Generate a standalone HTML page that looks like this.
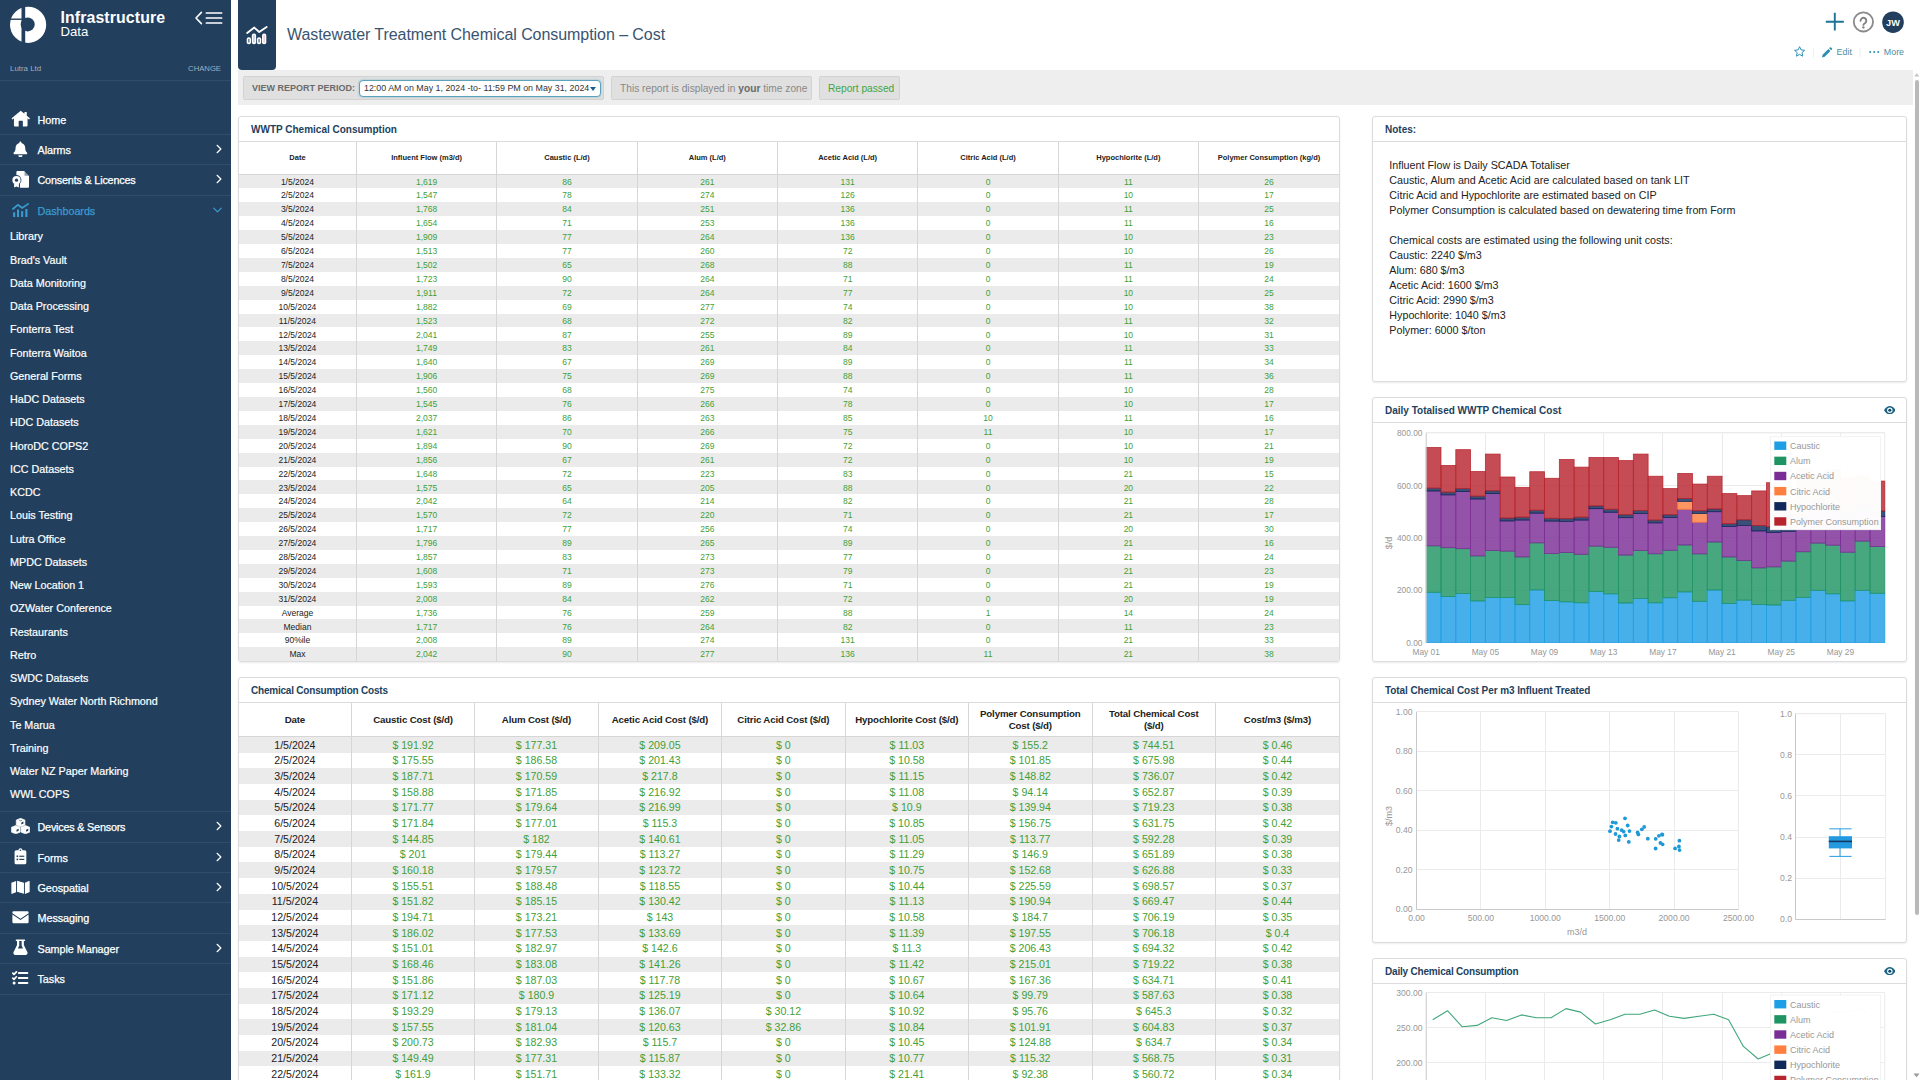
<!DOCTYPE html>
<html><head><meta charset="utf-8"><title>Wastewater Treatment Chemical Consumption - Cost</title>
<style>
*{box-sizing:border-box;margin:0;padding:0}
html,body{width:1920px;height:1080px;overflow:hidden;background:#fff;font-family:"Liberation Sans",sans-serif;color:#222}
.abs{position:absolute}
#side{position:absolute;left:0;top:0;width:231px;height:1080px;background:#223f5d;color:#fff;overflow:hidden}
#side .brand1{position:absolute;left:60.5px;top:9.2px;font-size:15.9px;font-weight:bold;letter-spacing:0.1px;line-height:18px;white-space:nowrap}
#side .brand2{position:absolute;left:60.5px;top:24.2px;font-size:13.2px;line-height:16px;white-space:nowrap}
#side .org{position:absolute;left:10px;top:62.5px;font-size:7.9px;line-height:12px;color:#9fb0c3}
#side .chg{position:absolute;right:10px;top:62.5px;font-size:7.7px;line-height:12px;color:#9fb0c3}
.hr{position:absolute;left:0;width:231px;height:1px;background:#2f4d6d}
.nav{position:absolute;left:0;width:231px;height:30px;font-size:10.8px;letter-spacing:-0.05px;line-height:30px;white-space:nowrap}
.nav .ic{position:absolute;left:10px;top:-1px;width:21px;height:30px;display:flex;align-items:center;justify-content:center}
.nav .tx{position:absolute;left:37.5px;top:0;-webkit-text-stroke:0.25px #fff}
.nav.act .tx{-webkit-text-stroke:0.25px #3a9bd0}
.nav .chev{position:absolute;right:9px;top:50%;transform:translateY(-50%);margin-top:-1px}
.nav.act .tx{color:#3a9bd0}
.sub{position:absolute;left:10px;font-size:10.75px;line-height:14px;white-space:nowrap;color:#fff;-webkit-text-stroke:0.2px #fff}
#hdr{position:absolute;left:231px;top:0;width:1689px;height:70px;background:#fff}
#hicon{position:absolute;left:238px;top:0;width:38px;height:70px;background:#223f5d;border-radius:0 0 4px 4px}
#title{position:absolute;left:287px;top:24px;font-size:16px;letter-spacing:-0.06px;line-height:22px;color:#3a546f;white-space:nowrap}
#tool{position:absolute;left:238px;top:70px;width:1675px;height:34.5px;background:#eee}
.tb{position:absolute;top:75.5px;height:24.5px;background:#e0e0e0;border:1px solid #d2d2d2;border-radius:2px;font-size:10.2px;line-height:23.5px;color:#777;white-space:nowrap}
.card{position:absolute;background:#fff;border:1px solid #dcdcdc;border-radius:3px;box-shadow:0 1px 2px rgba(0,0,0,.08)}
.card .ct{position:absolute;left:0;top:0;right:0;height:25px;border-bottom:1px solid #dcdcdc;font-size:10px;font-weight:bold;color:#223f5d;line-height:24px;padding:1px 0 0 12px;white-space:nowrap}
table{border-collapse:collapse;table-layout:fixed;position:absolute;left:0}
td,th{text-align:center;white-space:nowrap;overflow:hidden;padding:0;border-left:1px solid #d6d6d6}
td:first-child,th:first-child{border-left:none}
#t1{top:25px;width:1100px;font-size:8.5px}
#t1 th{height:32px;font-size:7.5px;font-weight:bold;color:#222;border-bottom:1px solid #d6d6d6}
#t1 td{height:13.914px;line-height:12.8px;padding-top:1.1px;color:#3f9f38}
#t1 td:first-child{color:#222}
#t2{top:25px;width:1100px;font-size:10.6px}
#t2 th{height:33.7px;font-size:9.7px;letter-spacing:-0.15px;line-height:11.4px;font-weight:bold;color:#222;border-bottom:1px solid #d6d6d6;white-space:normal}
#t2 td{height:15.68px;line-height:15.2px;padding-top:0.4px;color:#3f9f38}
#t2 td:first-child{color:#222}
tr.a td{background:#ebebeb}
.notes{position:absolute;left:16.3px;top:41px;font-size:10.74px;line-height:15px;color:#222;white-space:nowrap}
svg text{font-family:"Liberation Sans",sans-serif}
</style></head><body>

<div id="side">
<svg class="abs" style="left:9px;top:6px" width="38" height="38" viewBox="0 0 38 38"><circle cx="19.1" cy="18.8" r="18.1" fill="#fff"/><rect x="12.5" y="0" width="3.7" height="38" fill="#223f5d"/><rect x="0" y="12.5" width="13" height="1.4" fill="#223f5d"/><circle cx="18.7" cy="18.4" r="7" fill="#223f5d"/></svg>
<div class="brand1">Infrastructure</div><div class="brand2">Data</div>
<svg class="abs" style="left:194px;top:11px" width="30" height="14" viewBox="0 0 30 14"><path d="M7.4 1.4 L2 7 L7.4 12.6" fill="none" stroke="#fff" stroke-width="1.6" stroke-linecap="round" stroke-linejoin="round"/><path d="M12.4 2 H27.6 M12.4 7 H27.6 M12.4 12 H27.6" stroke="#fff" stroke-width="1.7" stroke-linecap="round"/></svg>
<div class="org">Lutra Ltd</div><div class="chg">CHANGE</div>
<div class="hr" style="top:80px"></div>
<div class="nav" style="top:104.85px"><span class="ic"><svg viewBox="0 0 24 22" width="19.5" height="17.2"><path d="M12 0.8 L0.7 10.3 a1 1 0 0 0 1.3 1.5 L3.3 10.7 V19.8 a1.2 1.2 0 0 0 1.2 1.2 H9.3 V14.6 a0.8 0.8 0 0 1 0.8 -0.8 H13.9 a0.8 0.8 0 0 1 0.8 0.8 V21 H19.5 a1.2 1.2 0 0 0 1.2 -1.2 V10.7 L22 11.8 a1 1 0 0 0 1.3 -1.5 L19.7 7.3 V3 a0.6 0.6 0 0 0 -0.6 -0.6 H17.3 a0.6 0.6 0 0 0 -0.6 0.6 V4.8 Z" fill="#fff"/></svg></span><span class="tx">Home</span></div>
<div class="hr" style="top:134px"></div>
<div class="nav" style="top:135px"><span class="ic"><svg viewBox="0 0 20 22" width="14.8" height="16.6"><path d="M10 0.4 a1.4 1.4 0 0 1 1.4 1.4 v0.6 c3.2 0.7 5.1 3.3 5.1 6.5 c0 3.6 1 5 2.4 6.4 c0.8 0.9 0.2 2.3 -0.9 2.3 H2 c-1.1 0 -1.7 -1.4 -0.9 -2.3 C2.5 13.9 3.5 12.5 3.5 8.9 c0 -3.2 1.9 -5.8 5.1 -6.5 V1.8 A1.4 1.4 0 0 1 10 0.4 Z M7.2 18.9 h5.6 a2.8 2.8 0 0 1 -5.6 0 Z" fill="#fff"/></svg></span><span class="tx">Alarms</span><svg class="chev" viewBox="0 0 8 12" width="6" height="9"><path d="M1.5 1 L6.5 6 L1.5 11" fill="none" stroke="#fff" stroke-width="1.6" stroke-linecap="round" stroke-linejoin="round"/></svg></div>
<div class="hr" style="top:163.7px"></div>
<div class="nav" style="top:165.3px"><span class="ic"><svg viewBox="0 0 17.4 16.8" width="17.4" height="16.8"><path d="M5.2 0.1 H12.2 L17.3 5.2 V15.4 a1.3 1.3 0 0 1 -1.3 1.3 H8 V12.4 a5 5 0 0 0 -3.6 -8.4 V0.9 a0.8 0.8 0 0 1 0.8 -0.8 Z" fill="#fff"/><path d="M12.6 0.3 V4.8 H17.1 Z" fill="#223f5d" opacity=".5"/><circle cx="4.5" cy="9.2" r="4.1" fill="#fff"/><circle cx="4.5" cy="9.2" r="1.6" fill="#223f5d"/><path d="M2.1 12.4 V16.6 L4.5 15.4 L6.9 16.6 V12.4 Z" fill="#fff"/></svg></span><span class="tx"><span style="letter-spacing:-0.18px">Consents &amp; Licences</span></span><svg class="chev" viewBox="0 0 8 12" width="6" height="9"><path d="M1.5 1 L6.5 6 L1.5 11" fill="none" stroke="#fff" stroke-width="1.6" stroke-linecap="round" stroke-linejoin="round"/></svg></div>
<div class="hr" style="top:195px"></div>
<div class="nav act" style="top:196px"><span class="ic"><svg viewBox="0 0 17 14.4" width="17" height="14.4"><path d="M0.9 6 L5.8 1.8 L10.2 5 L16.2 0.9" fill="none" stroke="#3a9bd0" stroke-width="1.7" stroke-linecap="round" stroke-linejoin="round"/><rect x="1.1" y="9.2" width="2.1" height="4.9" rx=".4" fill="#3a9bd0"/><rect x="5" y="6.6" width="2.1" height="7.5" rx=".4" fill="#3a9bd0"/><rect x="9.1" y="8" width="2.1" height="6.1" rx=".4" fill="#3a9bd0"/><rect x="13.3" y="6" width="2.2" height="8.1" rx=".4" fill="#3a9bd0"/></svg></span><span class="tx">Dashboards</span><svg class="chev" viewBox="0 0 12 8" width="9" height="6"><path d="M1 1.5 L6 6.5 L11 1.5" fill="none" stroke="#3a9bd0" stroke-width="1.6" stroke-linecap="round" stroke-linejoin="round"/></svg></div>
<div class="sub" style="top:229.30px">Library</div>
<div class="sub" style="top:252.55px">Brad's Vault</div>
<div class="sub" style="top:275.80px">Data Monitoring</div>
<div class="sub" style="top:299.05px">Data Processing</div>
<div class="sub" style="top:322.30px">Fonterra Test</div>
<div class="sub" style="top:345.55px">Fonterra Waitoa</div>
<div class="sub" style="top:368.80px">General Forms</div>
<div class="sub" style="top:392.05px">HaDC Datasets</div>
<div class="sub" style="top:415.30px">HDC Datasets</div>
<div class="sub" style="top:438.55px">HoroDC COPS2</div>
<div class="sub" style="top:461.80px">ICC Datasets</div>
<div class="sub" style="top:485.05px">KCDC</div>
<div class="sub" style="top:508.30px">Louis Testing</div>
<div class="sub" style="top:531.55px">Lutra Office</div>
<div class="sub" style="top:554.80px">MPDC Datasets</div>
<div class="sub" style="top:578.05px">New Location 1</div>
<div class="sub" style="top:601.30px">OZWater Conference</div>
<div class="sub" style="top:624.55px">Restaurants</div>
<div class="sub" style="top:647.80px">Retro</div>
<div class="sub" style="top:671.05px">SWDC Datasets</div>
<div class="sub" style="top:694.30px">Sydney Water North Richmond</div>
<div class="sub" style="top:717.55px">Te Marua</div>
<div class="sub" style="top:740.80px">Training</div>
<div class="sub" style="top:764.05px">Water NZ Paper Marking</div>
<div class="sub" style="top:787.30px">WWL COPS</div>
<div class="hr" style="top:811.2px"></div>
<div class="nav" style="top:812.2px"><span class="ic"><svg viewBox="0 0 24 20" width="19.2" height="16.2"><path d="M12 0.3 L17.4 2.4 V8.6 L12 10.9 L6.6 8.6 V2.4 Z" fill="#fff" stroke="#fff" stroke-width=".8" stroke-linejoin="round"/><path d="M6 9.3 L11.4 11.4 V17.6 L6 19.7 L0.6 17.6 V11.4 Z" fill="#fff" stroke="#fff" stroke-width=".8" stroke-linejoin="round"/><path d="M18 9.3 L23.4 11.4 V17.6 L18 19.7 L12.6 17.6 V11.4 Z" fill="#fff" stroke="#fff" stroke-width=".8" stroke-linejoin="round"/><path d="M12.9 5.6 L15.6 4.4 V6.8 L12.9 8 Z M6.9 14.6 L9.6 13.4 V15.8 L6.9 17 Z M18.9 14.6 L21.6 13.4 V15.8 L18.9 17 Z" fill="#223f5d"/><path d="M10 2.6 L12 3.4 L14 2.6" stroke="#223f5d" stroke-width=".7" fill="none"/></svg></span><span class="tx"><span style="letter-spacing:-0.2px">Devices &amp; Sensors</span></span><svg class="chev" viewBox="0 0 8 12" width="6" height="9"><path d="M1.5 1 L6.5 6 L1.5 11" fill="none" stroke="#fff" stroke-width="1.6" stroke-linecap="round" stroke-linejoin="round"/></svg></div>
<div class="hr" style="top:841.6px"></div>
<div class="nav" style="top:842.58px"><span class="ic"><svg viewBox="0 0 18 23" width="12.9" height="16.8"><path d="M6.2 2.8 a2.8 2.8 0 0 1 5.6 0 H15 a2.2 2.2 0 0 1 2.2 2.2 V20.4 a2.2 2.2 0 0 1 -2.2 2.2 H3 a2.2 2.2 0 0 1 -2.2 -2.2 V5 A2.2 2.2 0 0 1 3 2.8 Z" fill="#fff"/><circle cx="9" cy="3" r="1.1" fill="#223f5d"/><g fill="#223f5d"><rect x="3.6" y="10.2" width="2.2" height="2.2"/><rect x="7.4" y="10.5" width="7" height="1.6"/><rect x="3.6" y="14.6" width="2.2" height="2.2"/><rect x="7.4" y="14.9" width="7" height="1.6"/></g></svg></span><span class="tx">Forms</span><svg class="chev" viewBox="0 0 8 12" width="6" height="9"><path d="M1.5 1 L6.5 6 L1.5 11" fill="none" stroke="#fff" stroke-width="1.6" stroke-linecap="round" stroke-linejoin="round"/></svg></div>
<div class="hr" style="top:872.0px"></div>
<div class="nav" style="top:872.96px"><span class="ic"><svg viewBox="0 0 24 18" width="19" height="14.2"><path d="M0.4 3.6 L6.4 1.2 V15.6 L1.4 17.6 a0.7 0.7 0 0 1 -1 -0.7 Z M7.6 1 L16.4 3.6 V17.6 L7.6 15 Z M17.6 3.4 L22.6 1.2 a0.7 0.7 0 0 1 1 0.7 V15.2 L17.6 17.8 Z" fill="#fff"/></svg></span><span class="tx">Geospatial</span><svg class="chev" viewBox="0 0 8 12" width="6" height="9"><path d="M1.5 1 L6.5 6 L1.5 11" fill="none" stroke="#fff" stroke-width="1.6" stroke-linecap="round" stroke-linejoin="round"/></svg></div>
<div class="hr" style="top:902.3px"></div>
<div class="nav" style="top:903.34px"><span class="ic"><svg viewBox="0 0 24 18" width="17" height="12.6"><path d="M2.2 0.4 H21.8 a1.8 1.8 0 0 1 1.8 1.8 v0.9 L12 11 L0.4 3.1 V2.2 A1.8 1.8 0 0 1 2.2 0.4 Z M0.4 5 L12 12.8 L23.6 5 V15.8 a1.8 1.8 0 0 1 -1.8 1.8 H2.2 A1.8 1.8 0 0 1 0.4 15.8 Z" fill="#fff"/></svg></span><span class="tx">Messaging</span></div>
<div class="hr" style="top:932.7px"></div>
<div class="nav" style="top:933.72px"><span class="ic"><svg viewBox="0 0 20 22" width="14.9" height="16.7"><path d="M4.6 0.6 H15.4 a1 1 0 0 1 0 2 H14.6 V8 L19.2 17.4 a2.6 2.6 0 0 1 -2.3 3.8 H3.1 A2.6 2.6 0 0 1 0.8 17.4 L5.4 8 V2.6 H4.6 a1 1 0 0 1 0 -2 Z" fill="#fff"/><path d="M8.4 2.6 H11.6 V8.6 L13.4 12.4 H6.6 L8.4 8.6 Z" fill="#223f5d"/></svg></span><span class="tx">Sample Manager</span><svg class="chev" viewBox="0 0 8 12" width="6" height="9"><path d="M1.5 1 L6.5 6 L1.5 11" fill="none" stroke="#fff" stroke-width="1.6" stroke-linecap="round" stroke-linejoin="round"/></svg></div>
<div class="hr" style="top:963.1px"></div>
<div class="nav" style="top:964.1px"><span class="ic"><svg viewBox="0 0 16.6 13.6" width="16.6" height="13.6"><path d="M0.8 2.2 L2 3.4 L4.4 0.8 M0.8 7.2 L2 8.4 L4.4 5.8" stroke="#fff" stroke-width="1.7" fill="none" stroke-linecap="round" stroke-linejoin="round"/><circle cx="2.1" cy="12" r="1.5" fill="#fff"/><rect x="5.8" y="1.1" width="10.6" height="2" rx="1" fill="#fff"/><rect x="5.8" y="6" width="10.6" height="2" rx="1" fill="#fff"/><rect x="5.8" y="11" width="10.6" height="2" rx="1" fill="#fff"/></svg></span><span class="tx">Tasks</span></div>
<div class="hr" style="top:993.5px"></div>
</div>
<div id="hdr"></div><div id="hicon"><svg class="abs" style="left:8.2px;top:25.6px" width="22" height="19" viewBox="0 0 22 19"><path d="M1.2 7 L8.3 1.6 L13.2 6 L20.6 1" fill="none" stroke="#fff" stroke-width="1.9" stroke-linecap="round" stroke-linejoin="round"/><rect x="0.7" y="11.2" width="4.3" height="7" rx="2" fill="#fff"/><rect x="5.8" y="7.4" width="4.3" height="10.8" rx="2" fill="#fff"/><rect x="10.9" y="11.2" width="4.3" height="7" rx="2" fill="#fff"/><rect x="16" y="7.4" width="4.3" height="10.8" rx="2" fill="#fff"/><rect x="2.2" y="12.8" width="1.3" height="3.8" rx=".6" fill="#5a6f88"/><rect x="7.3" y="9" width="1.3" height="7.6" rx=".6" fill="#b5c4e6"/><rect x="12.4" y="12.8" width="1.3" height="3.8" rx=".6" fill="#5a6f88"/><rect x="17.5" y="9" width="1.3" height="7.6" rx=".6" fill="#ecc4cf"/></svg></div>
<div id="title">Wastewater Treatment Chemical Consumption &ndash; Cost</div>
<svg class="abs" style="left:1780px;top:0" width="140" height="70" viewBox="0 0 140 70"><path d="M45.8 21.7 H63.8 M54.8 12.8 V30.6" stroke="#1d7395" stroke-width="1.9" fill="none"/><circle cx="83.4" cy="21.9" r="9.6" fill="none" stroke="#8a8a8a" stroke-width="1.8"/><path d="M80.5 20.7 a2.9 2.9 0 1 1 4.4 2.5 c-1 0.6 -1.5 0.9 -1.5 1.7" fill="none" stroke="#808080" stroke-width="1.9" stroke-linecap="round"/><circle cx="83.4" cy="27.4" r="1.2" fill="#808080"/><circle cx="113" cy="22.2" r="10.8" fill="#223f5d"/><text x="113" y="25.5" font-size="9.2" font-weight="bold" fill="#fff" text-anchor="middle">JW</text><path d="M19.6 46.7 L21.1 49.9 L24.6 50.3 L22 52.7 L22.7 56.2 L19.6 54.4 L16.5 56.2 L17.2 52.7 L14.6 50.3 L18.1 49.9 Z" fill="none" stroke="#2a8fb2" stroke-width="1" stroke-linejoin="round"/><path d="M33.5 47.5 V57.5 M80 47.5 V57.5" stroke="#efefef" stroke-width="1"/><path d="M42 57.4 L42.6 54.7 L48.4 48.9 L50.5 51 L44.7 56.8 Z M49.1 48.2 L49.8 47.5 a0.9 0.9 0 0 1 1.3 0 L51.9 48.3 a0.9 0.9 0 0 1 0 1.3 L51.2 50.3 Z" fill="#2a8fb2"/><text x="56.6" y="55.2" font-size="8.9" fill="#4d8ca6">Edit</text><circle cx="90.2" cy="51.9" r="1" fill="#2a8fb2"/><circle cx="94.2" cy="51.9" r="1" fill="#2a8fb2"/><circle cx="98.2" cy="51.9" r="1" fill="#2a8fb2"/><text x="103.8" y="55.2" font-size="8.9" fill="#4d8ca6">More</text></svg>
<div id="tool"></div>
<div class="tb" style="left:243px;width:361px"><b style="position:absolute;left:8px;top:0;color:#6a6a6a;font-size:9px">VIEW REPORT PERIOD:</b><div style="position:absolute;left:115px;top:3.5px;width:242px;height:16.5px;background:#fff;border:1px solid #5aa3bb;border-radius:4px;box-shadow:0 0 2px rgba(60,150,180,.6);font-size:8.9px;line-height:15px;color:#333;padding-left:4px">12:00 AM on May 1, 2024 -to- 11:59 PM on May 31, 2024<svg class="abs" style="right:4px;top:5.5px" width="6" height="4" viewBox="0 0 6 4"><path d="M0 0 H6 L3 4 Z" fill="#1d5f8a"/></svg></div></div>
<div class="tb" style="left:611px;width:201px;padding-left:8px;color:#888">This report is displayed in <b style="color:#6a6a6a">your</b> time zone</div>
<div class="tb" style="left:819px;width:81px;padding-left:8px;color:#43a443">Report passed</div>
<div class="abs" style="left:1913px;top:70px;width:7px;height:1010px;background:#fff"></div>
<div class="abs" style="left:1914.7px;top:80px;width:4.2px;height:835px;background:#b9b9b9;border-radius:2px"></div>
<svg class="abs" style="left:1913px;top:72px" width="7" height="5"><path d="M1.2 4.5 L3.8 1.2 L6.4 4.5 Z" fill="#c4c4c4"/></svg>
<svg class="abs" style="left:1913px;top:1073px" width="7" height="5"><path d="M0.5 0.5 L3.5 4.2 L6.5 0.5 Z" fill="#9a9a9a"/></svg>
<div class="card" style="left:238px;top:116px;width:1102px;height:546px"><div class="ct">WWTP Chemical Consumption</div>
<table id="t1"><colgroup><col style="width:117.4px"><col style="width:140.37px"><col style="width:140.37px"><col style="width:140.37px"><col style="width:140.37px"><col style="width:140.37px"><col style="width:140.37px"><col style="width:140.37px"></colgroup>
<tr><th>Date</th><th>Influent Flow (m3/d)</th><th>Caustic (L/d)</th><th>Alum (L/d)</th><th>Acetic Acid (L/d)</th><th>Citric Acid (L/d)</th><th>Hypochlorite (L/d)</th><th>Polymer Consumption (kg/d)</th></tr>
<tr class="a"><td>1/5/2024</td><td>1,619</td><td>86</td><td>261</td><td>131</td><td>0</td><td>11</td><td>26</td></tr>
<tr><td>2/5/2024</td><td>1,547</td><td>78</td><td>274</td><td>126</td><td>0</td><td>10</td><td>17</td></tr>
<tr class="a"><td>3/5/2024</td><td>1,768</td><td>84</td><td>251</td><td>136</td><td>0</td><td>11</td><td>25</td></tr>
<tr><td>4/5/2024</td><td>1,654</td><td>71</td><td>253</td><td>136</td><td>0</td><td>11</td><td>16</td></tr>
<tr class="a"><td>5/5/2024</td><td>1,909</td><td>77</td><td>264</td><td>136</td><td>0</td><td>10</td><td>23</td></tr>
<tr><td>6/5/2024</td><td>1,513</td><td>77</td><td>260</td><td>72</td><td>0</td><td>10</td><td>26</td></tr>
<tr class="a"><td>7/5/2024</td><td>1,502</td><td>65</td><td>268</td><td>88</td><td>0</td><td>11</td><td>19</td></tr>
<tr><td>8/5/2024</td><td>1,723</td><td>90</td><td>264</td><td>71</td><td>0</td><td>11</td><td>24</td></tr>
<tr class="a"><td>9/5/2024</td><td>1,911</td><td>72</td><td>264</td><td>77</td><td>0</td><td>10</td><td>25</td></tr>
<tr><td>10/5/2024</td><td>1,882</td><td>69</td><td>277</td><td>74</td><td>0</td><td>10</td><td>38</td></tr>
<tr class="a"><td>11/5/2024</td><td>1,523</td><td>68</td><td>272</td><td>82</td><td>0</td><td>11</td><td>32</td></tr>
<tr><td>12/5/2024</td><td>2,041</td><td>87</td><td>255</td><td>89</td><td>0</td><td>10</td><td>31</td></tr>
<tr class="a"><td>13/5/2024</td><td>1,749</td><td>83</td><td>261</td><td>84</td><td>0</td><td>11</td><td>33</td></tr>
<tr><td>14/5/2024</td><td>1,640</td><td>67</td><td>269</td><td>89</td><td>0</td><td>11</td><td>34</td></tr>
<tr class="a"><td>15/5/2024</td><td>1,906</td><td>75</td><td>269</td><td>88</td><td>0</td><td>11</td><td>36</td></tr>
<tr><td>16/5/2024</td><td>1,560</td><td>68</td><td>275</td><td>74</td><td>0</td><td>10</td><td>28</td></tr>
<tr class="a"><td>17/5/2024</td><td>1,545</td><td>76</td><td>266</td><td>78</td><td>0</td><td>10</td><td>17</td></tr>
<tr><td>18/5/2024</td><td>2,037</td><td>86</td><td>263</td><td>85</td><td>10</td><td>11</td><td>16</td></tr>
<tr class="a"><td>19/5/2024</td><td>1,621</td><td>70</td><td>266</td><td>75</td><td>11</td><td>10</td><td>17</td></tr>
<tr><td>20/5/2024</td><td>1,894</td><td>90</td><td>269</td><td>72</td><td>0</td><td>10</td><td>21</td></tr>
<tr class="a"><td>21/5/2024</td><td>1,856</td><td>67</td><td>261</td><td>72</td><td>0</td><td>10</td><td>19</td></tr>
<tr><td>22/5/2024</td><td>1,648</td><td>72</td><td>223</td><td>83</td><td>0</td><td>21</td><td>15</td></tr>
<tr class="a"><td>23/5/2024</td><td>1,575</td><td>65</td><td>205</td><td>88</td><td>0</td><td>20</td><td>22</td></tr>
<tr><td>24/5/2024</td><td>2,042</td><td>64</td><td>214</td><td>82</td><td>0</td><td>21</td><td>28</td></tr>
<tr class="a"><td>25/5/2024</td><td>1,570</td><td>72</td><td>220</td><td>71</td><td>0</td><td>21</td><td>17</td></tr>
<tr><td>26/5/2024</td><td>1,717</td><td>77</td><td>256</td><td>74</td><td>0</td><td>20</td><td>30</td></tr>
<tr class="a"><td>27/5/2024</td><td>1,796</td><td>89</td><td>265</td><td>89</td><td>0</td><td>21</td><td>16</td></tr>
<tr><td>28/5/2024</td><td>1,857</td><td>83</td><td>273</td><td>77</td><td>0</td><td>21</td><td>24</td></tr>
<tr class="a"><td>29/5/2024</td><td>1,608</td><td>71</td><td>273</td><td>79</td><td>0</td><td>21</td><td>23</td></tr>
<tr><td>30/5/2024</td><td>1,593</td><td>89</td><td>276</td><td>71</td><td>0</td><td>21</td><td>19</td></tr>
<tr class="a"><td>31/5/2024</td><td>2,008</td><td>84</td><td>262</td><td>72</td><td>0</td><td>20</td><td>19</td></tr>
<tr><td>Average</td><td>1,736</td><td>76</td><td>259</td><td>88</td><td>1</td><td>14</td><td>24</td></tr>
<tr class="a"><td>Median</td><td>1,717</td><td>76</td><td>264</td><td>82</td><td>0</td><td>11</td><td>23</td></tr>
<tr><td>90%ile</td><td>2,008</td><td>89</td><td>274</td><td>131</td><td>0</td><td>21</td><td>33</td></tr>
<tr class="a"><td>Max</td><td>2,042</td><td>90</td><td>277</td><td>136</td><td>11</td><td>21</td><td>38</td></tr>
</table></div>
<div class="card" style="left:238px;top:677px;width:1102px;height:420px;border-radius:3px 3px 0 0"><div class="ct" style="letter-spacing:-0.21px">Chemical Consumption Costs</div>
<table id="t2"><colgroup><col style="width:112.3px"><col style="width:123.46px"><col style="width:123.46px"><col style="width:123.46px"><col style="width:123.46px"><col style="width:123.46px"><col style="width:123.46px"><col style="width:123.46px"><col style="width:123.46px"></colgroup>
<tr><th>Date</th><th>Caustic Cost ($/d)</th><th>Alum Cost ($/d)</th><th>Acetic Acid Cost ($/d)</th><th>Citric Acid Cost ($/d)</th><th>Hypochlorite Cost ($/d)</th><th>Polymer Consumption<br>Cost ($/d)</th><th>Total Chemical Cost<br>($/d)</th><th>Cost/m3 ($/m3)</th></tr>
<tr class="a"><td>1/5/2024</td><td>$ 191.92</td><td>$ 177.31</td><td>$ 209.05</td><td>$ 0</td><td>$ 11.03</td><td>$ 155.2</td><td>$ 744.51</td><td>$ 0.46</td></tr>
<tr><td>2/5/2024</td><td>$ 175.55</td><td>$ 186.58</td><td>$ 201.43</td><td>$ 0</td><td>$ 10.58</td><td>$ 101.85</td><td>$ 675.98</td><td>$ 0.44</td></tr>
<tr class="a"><td>3/5/2024</td><td>$ 187.71</td><td>$ 170.59</td><td>$ 217.8</td><td>$ 0</td><td>$ 11.15</td><td>$ 148.82</td><td>$ 736.07</td><td>$ 0.42</td></tr>
<tr><td>4/5/2024</td><td>$ 158.88</td><td>$ 171.85</td><td>$ 216.92</td><td>$ 0</td><td>$ 11.08</td><td>$ 94.14</td><td>$ 652.87</td><td>$ 0.39</td></tr>
<tr class="a"><td>5/5/2024</td><td>$ 171.77</td><td>$ 179.64</td><td>$ 216.99</td><td>$ 0</td><td>$ 10.9</td><td>$ 139.94</td><td>$ 719.23</td><td>$ 0.38</td></tr>
<tr><td>6/5/2024</td><td>$ 171.84</td><td>$ 177.01</td><td>$ 115.3</td><td>$ 0</td><td>$ 10.85</td><td>$ 156.75</td><td>$ 631.75</td><td>$ 0.42</td></tr>
<tr class="a"><td>7/5/2024</td><td>$ 144.85</td><td>$ 182</td><td>$ 140.61</td><td>$ 0</td><td>$ 11.05</td><td>$ 113.77</td><td>$ 592.28</td><td>$ 0.39</td></tr>
<tr><td>8/5/2024</td><td>$ 201</td><td>$ 179.44</td><td>$ 113.27</td><td>$ 0</td><td>$ 11.29</td><td>$ 146.9</td><td>$ 651.89</td><td>$ 0.38</td></tr>
<tr class="a"><td>9/5/2024</td><td>$ 160.18</td><td>$ 179.57</td><td>$ 123.72</td><td>$ 0</td><td>$ 10.75</td><td>$ 152.68</td><td>$ 626.88</td><td>$ 0.33</td></tr>
<tr><td>10/5/2024</td><td>$ 155.51</td><td>$ 188.48</td><td>$ 118.55</td><td>$ 0</td><td>$ 10.44</td><td>$ 225.59</td><td>$ 698.57</td><td>$ 0.37</td></tr>
<tr class="a"><td>11/5/2024</td><td>$ 151.82</td><td>$ 185.15</td><td>$ 130.42</td><td>$ 0</td><td>$ 11.13</td><td>$ 190.94</td><td>$ 669.47</td><td>$ 0.44</td></tr>
<tr><td>12/5/2024</td><td>$ 194.71</td><td>$ 173.21</td><td>$ 143</td><td>$ 0</td><td>$ 10.58</td><td>$ 184.7</td><td>$ 706.19</td><td>$ 0.35</td></tr>
<tr class="a"><td>13/5/2024</td><td>$ 186.02</td><td>$ 177.53</td><td>$ 133.69</td><td>$ 0</td><td>$ 11.39</td><td>$ 197.55</td><td>$ 706.18</td><td>$ 0.4</td></tr>
<tr><td>14/5/2024</td><td>$ 151.01</td><td>$ 182.97</td><td>$ 142.6</td><td>$ 0</td><td>$ 11.3</td><td>$ 206.43</td><td>$ 694.32</td><td>$ 0.42</td></tr>
<tr class="a"><td>15/5/2024</td><td>$ 168.46</td><td>$ 183.08</td><td>$ 141.26</td><td>$ 0</td><td>$ 11.42</td><td>$ 215.01</td><td>$ 719.22</td><td>$ 0.38</td></tr>
<tr><td>16/5/2024</td><td>$ 151.86</td><td>$ 187.03</td><td>$ 117.78</td><td>$ 0</td><td>$ 10.67</td><td>$ 167.36</td><td>$ 634.71</td><td>$ 0.41</td></tr>
<tr class="a"><td>17/5/2024</td><td>$ 171.12</td><td>$ 180.9</td><td>$ 125.19</td><td>$ 0</td><td>$ 10.64</td><td>$ 99.79</td><td>$ 587.63</td><td>$ 0.38</td></tr>
<tr><td>18/5/2024</td><td>$ 193.29</td><td>$ 179.13</td><td>$ 136.07</td><td>$ 30.12</td><td>$ 10.92</td><td>$ 95.76</td><td>$ 645.3</td><td>$ 0.32</td></tr>
<tr class="a"><td>19/5/2024</td><td>$ 157.55</td><td>$ 181.04</td><td>$ 120.63</td><td>$ 32.86</td><td>$ 10.84</td><td>$ 101.91</td><td>$ 604.83</td><td>$ 0.37</td></tr>
<tr><td>20/5/2024</td><td>$ 200.73</td><td>$ 182.93</td><td>$ 115.7</td><td>$ 0</td><td>$ 10.45</td><td>$ 124.88</td><td>$ 634.7</td><td>$ 0.34</td></tr>
<tr class="a"><td>21/5/2024</td><td>$ 149.49</td><td>$ 177.31</td><td>$ 115.87</td><td>$ 0</td><td>$ 10.77</td><td>$ 115.32</td><td>$ 568.75</td><td>$ 0.31</td></tr>
<tr><td>22/5/2024</td><td>$ 161.9</td><td>$ 151.71</td><td>$ 133.32</td><td>$ 0</td><td>$ 21.41</td><td>$ 92.38</td><td>$ 560.72</td><td>$ 0.34</td></tr>
<tr class="a"><td>23/5/2024</td><td>$ 145.6</td><td>$ 139.4</td><td>$ 140.8</td><td>$ 0</td><td>$ 20.8</td><td>$ 132</td><td>$ 578.6</td><td>$ 0.37</td></tr>
</table></div>
<div class="card" style="left:1372px;top:116px;width:535px;height:266px"><div class="ct">Notes:</div><div class="notes">Influent Flow is Daily SCADA Totaliser<br>Caustic, Alum and Acetic Acid are calculated based on tank LIT<br>Citric Acid and Hypochlorite are estimated based on CIP<br>Polymer Consumption is calculated based on dewatering time from Form<br><br>Chemical costs are estimated using the following unit costs:<br>Caustic: 2240 $/m3<br>Alum: 680 $/m3<br>Acetic Acid: 1600 $/m3<br>Citric Acid: 2990 $/m3<br>Hypochlorite: 1040 $/m3<br>Polymer: 6000 $/ton</div></div>
<div class="card" style="left:1372px;top:397px;width:535px;height:265px"><div class="ct">Daily Totalised WWTP Chemical Cost</div><svg class="abs" style="right:10.7px;top:7.7px" width="11.6" height="8.4" viewBox="0 0 11.6 8.4"><path d="M0 4.2 C1.8 1.2 3.8 0 5.8 0 S9.8 1.2 11.6 4.2 C9.8 7.2 7.8 8.4 5.8 8.4 S1.8 7.2 0 4.2 Z" fill="#1f6283"/><circle cx="5.8" cy="4.2" r="2.75" fill="#e4faff"/><circle cx="5.8" cy="4.2" r="1.5" fill="#17435c"/></svg></div>
<svg class="abs" style="left:1372px;top:423px" width="535" height="238" viewBox="1372 423 535 238"><path d="M1426.2 642.5 H1884.8" stroke="#ebebeb" stroke-width="1"/><text x="1422.5" y="645.8" font-size="8.4" fill="#979797" text-anchor="end">0.00</text><path d="M1426.2 590.5 H1884.8" stroke="#ebebeb" stroke-width="1"/><text x="1422.5" y="593.375" font-size="8.4" fill="#979797" text-anchor="end">200.00</text><path d="M1426.2 537.5 H1884.8" stroke="#ebebeb" stroke-width="1"/><text x="1422.5" y="540.95" font-size="8.4" fill="#979797" text-anchor="end">400.00</text><path d="M1426.2 485.5 H1884.8" stroke="#ebebeb" stroke-width="1"/><text x="1422.5" y="488.525" font-size="8.4" fill="#979797" text-anchor="end">600.00</text><path d="M1426.2 432.5 H1884.8" stroke="#ebebeb" stroke-width="1"/><text x="1422.5" y="436.1" font-size="8.4" fill="#979797" text-anchor="end">800.00</text><path d="M1426.5 432.9 V642.6" stroke="#ebebeb" stroke-width="1"/><text x="1426.2" y="654.6" font-size="8.35" fill="#979797" text-anchor="middle">May 01</text><path d="M1485.5 432.9 V642.6" stroke="#ebebeb" stroke-width="1"/><text x="1485.37" y="654.6" font-size="8.35" fill="#979797" text-anchor="middle">May 05</text><path d="M1544.5 432.9 V642.6" stroke="#ebebeb" stroke-width="1"/><text x="1544.55" y="654.6" font-size="8.35" fill="#979797" text-anchor="middle">May 09</text><path d="M1603.5 432.9 V642.6" stroke="#ebebeb" stroke-width="1"/><text x="1603.72" y="654.6" font-size="8.35" fill="#979797" text-anchor="middle">May 13</text><path d="M1662.5 432.9 V642.6" stroke="#ebebeb" stroke-width="1"/><text x="1662.9" y="654.6" font-size="8.35" fill="#979797" text-anchor="middle">May 17</text><path d="M1722.5 432.9 V642.6" stroke="#ebebeb" stroke-width="1"/><text x="1722.07" y="654.6" font-size="8.35" fill="#979797" text-anchor="middle">May 21</text><path d="M1781.5 432.9 V642.6" stroke="#ebebeb" stroke-width="1"/><text x="1781.25" y="654.6" font-size="8.35" fill="#979797" text-anchor="middle">May 25</text><path d="M1840.5 432.9 V642.6" stroke="#ebebeb" stroke-width="1"/><text x="1840.42" y="654.6" font-size="8.35" fill="#979797" text-anchor="middle">May 29</text><path d="M1426.2 432.9 H1884.8 V642.6" stroke="#ebebeb" stroke-width="1" fill="none"/><rect x="1426.20" y="592.29" width="14.79" height="50.31" fill="#1e9ee4" fill-opacity="0.82" stroke="#1e9ee4" stroke-opacity="0.9" stroke-width="0.8"/><rect x="1426.20" y="545.82" width="14.79" height="46.48" fill="#1e9463" fill-opacity="0.82" stroke="#1e9463" stroke-opacity="0.9" stroke-width="0.8"/><rect x="1426.20" y="491.02" width="14.79" height="54.80" fill="#7b2d96" fill-opacity="0.82" stroke="#7b2d96" stroke-opacity="0.9" stroke-width="0.8"/><rect x="1426.20" y="488.13" width="14.79" height="2.89" fill="#10295a" fill-opacity="0.82" stroke="#10295a" stroke-opacity="0.9" stroke-width="0.8"/><rect x="1426.20" y="447.45" width="14.79" height="40.68" fill="#b8242e" fill-opacity="0.82" stroke="#b8242e" stroke-opacity="0.9" stroke-width="0.8"/><rect x="1440.99" y="596.58" width="14.79" height="46.02" fill="#1e9ee4" fill-opacity="0.82" stroke="#1e9ee4" stroke-opacity="0.9" stroke-width="0.8"/><rect x="1440.99" y="547.68" width="14.79" height="48.91" fill="#1e9463" fill-opacity="0.82" stroke="#1e9463" stroke-opacity="0.9" stroke-width="0.8"/><rect x="1440.99" y="494.88" width="14.79" height="52.80" fill="#7b2d96" fill-opacity="0.82" stroke="#7b2d96" stroke-opacity="0.9" stroke-width="0.8"/><rect x="1440.99" y="492.10" width="14.79" height="2.77" fill="#10295a" fill-opacity="0.82" stroke="#10295a" stroke-opacity="0.9" stroke-width="0.8"/><rect x="1440.99" y="465.41" width="14.79" height="26.70" fill="#b8242e" fill-opacity="0.82" stroke="#b8242e" stroke-opacity="0.9" stroke-width="0.8"/><rect x="1455.79" y="593.40" width="14.79" height="49.20" fill="#1e9ee4" fill-opacity="0.82" stroke="#1e9ee4" stroke-opacity="0.9" stroke-width="0.8"/><rect x="1455.79" y="548.68" width="14.79" height="44.72" fill="#1e9463" fill-opacity="0.82" stroke="#1e9463" stroke-opacity="0.9" stroke-width="0.8"/><rect x="1455.79" y="491.59" width="14.79" height="57.09" fill="#7b2d96" fill-opacity="0.82" stroke="#7b2d96" stroke-opacity="0.9" stroke-width="0.8"/><rect x="1455.79" y="488.67" width="14.79" height="2.92" fill="#10295a" fill-opacity="0.82" stroke="#10295a" stroke-opacity="0.9" stroke-width="0.8"/><rect x="1455.79" y="449.66" width="14.79" height="39.01" fill="#b8242e" fill-opacity="0.82" stroke="#b8242e" stroke-opacity="0.9" stroke-width="0.8"/><rect x="1470.58" y="600.95" width="14.79" height="41.65" fill="#1e9ee4" fill-opacity="0.82" stroke="#1e9ee4" stroke-opacity="0.9" stroke-width="0.8"/><rect x="1470.58" y="555.91" width="14.79" height="45.05" fill="#1e9463" fill-opacity="0.82" stroke="#1e9463" stroke-opacity="0.9" stroke-width="0.8"/><rect x="1470.58" y="499.05" width="14.79" height="56.86" fill="#7b2d96" fill-opacity="0.82" stroke="#7b2d96" stroke-opacity="0.9" stroke-width="0.8"/><rect x="1470.58" y="496.14" width="14.79" height="2.90" fill="#10295a" fill-opacity="0.82" stroke="#10295a" stroke-opacity="0.9" stroke-width="0.8"/><rect x="1470.58" y="471.47" width="14.79" height="24.68" fill="#b8242e" fill-opacity="0.82" stroke="#b8242e" stroke-opacity="0.9" stroke-width="0.8"/><rect x="1485.37" y="597.57" width="14.79" height="45.03" fill="#1e9ee4" fill-opacity="0.82" stroke="#1e9ee4" stroke-opacity="0.9" stroke-width="0.8"/><rect x="1485.37" y="550.49" width="14.79" height="47.09" fill="#1e9463" fill-opacity="0.82" stroke="#1e9463" stroke-opacity="0.9" stroke-width="0.8"/><rect x="1485.37" y="493.61" width="14.79" height="56.88" fill="#7b2d96" fill-opacity="0.82" stroke="#7b2d96" stroke-opacity="0.9" stroke-width="0.8"/><rect x="1485.37" y="490.75" width="14.79" height="2.86" fill="#10295a" fill-opacity="0.82" stroke="#10295a" stroke-opacity="0.9" stroke-width="0.8"/><rect x="1485.37" y="454.07" width="14.79" height="36.68" fill="#b8242e" fill-opacity="0.82" stroke="#b8242e" stroke-opacity="0.9" stroke-width="0.8"/><rect x="1500.17" y="597.56" width="14.79" height="45.04" fill="#1e9ee4" fill-opacity="0.82" stroke="#1e9ee4" stroke-opacity="0.9" stroke-width="0.8"/><rect x="1500.17" y="551.16" width="14.79" height="46.40" fill="#1e9463" fill-opacity="0.82" stroke="#1e9463" stroke-opacity="0.9" stroke-width="0.8"/><rect x="1500.17" y="520.93" width="14.79" height="30.22" fill="#7b2d96" fill-opacity="0.82" stroke="#7b2d96" stroke-opacity="0.9" stroke-width="0.8"/><rect x="1500.17" y="518.09" width="14.79" height="2.84" fill="#10295a" fill-opacity="0.82" stroke="#10295a" stroke-opacity="0.9" stroke-width="0.8"/><rect x="1500.17" y="477.00" width="14.79" height="41.09" fill="#b8242e" fill-opacity="0.82" stroke="#b8242e" stroke-opacity="0.9" stroke-width="0.8"/><rect x="1514.96" y="604.63" width="14.79" height="37.97" fill="#1e9ee4" fill-opacity="0.82" stroke="#1e9ee4" stroke-opacity="0.9" stroke-width="0.8"/><rect x="1514.96" y="556.92" width="14.79" height="47.71" fill="#1e9463" fill-opacity="0.82" stroke="#1e9463" stroke-opacity="0.9" stroke-width="0.8"/><rect x="1514.96" y="520.07" width="14.79" height="36.86" fill="#7b2d96" fill-opacity="0.82" stroke="#7b2d96" stroke-opacity="0.9" stroke-width="0.8"/><rect x="1514.96" y="517.17" width="14.79" height="2.90" fill="#10295a" fill-opacity="0.82" stroke="#10295a" stroke-opacity="0.9" stroke-width="0.8"/><rect x="1514.96" y="487.35" width="14.79" height="29.82" fill="#b8242e" fill-opacity="0.82" stroke="#b8242e" stroke-opacity="0.9" stroke-width="0.8"/><rect x="1529.75" y="589.91" width="14.79" height="52.69" fill="#1e9ee4" fill-opacity="0.82" stroke="#1e9ee4" stroke-opacity="0.9" stroke-width="0.8"/><rect x="1529.75" y="542.88" width="14.79" height="47.04" fill="#1e9463" fill-opacity="0.82" stroke="#1e9463" stroke-opacity="0.9" stroke-width="0.8"/><rect x="1529.75" y="513.19" width="14.79" height="29.69" fill="#7b2d96" fill-opacity="0.82" stroke="#7b2d96" stroke-opacity="0.9" stroke-width="0.8"/><rect x="1529.75" y="510.23" width="14.79" height="2.96" fill="#10295a" fill-opacity="0.82" stroke="#10295a" stroke-opacity="0.9" stroke-width="0.8"/><rect x="1529.75" y="471.72" width="14.79" height="38.51" fill="#b8242e" fill-opacity="0.82" stroke="#b8242e" stroke-opacity="0.9" stroke-width="0.8"/><rect x="1544.55" y="600.61" width="14.79" height="41.99" fill="#1e9ee4" fill-opacity="0.82" stroke="#1e9ee4" stroke-opacity="0.9" stroke-width="0.8"/><rect x="1544.55" y="553.54" width="14.79" height="47.07" fill="#1e9463" fill-opacity="0.82" stroke="#1e9463" stroke-opacity="0.9" stroke-width="0.8"/><rect x="1544.55" y="521.11" width="14.79" height="32.43" fill="#7b2d96" fill-opacity="0.82" stroke="#7b2d96" stroke-opacity="0.9" stroke-width="0.8"/><rect x="1544.55" y="518.30" width="14.79" height="2.82" fill="#10295a" fill-opacity="0.82" stroke="#10295a" stroke-opacity="0.9" stroke-width="0.8"/><rect x="1544.55" y="478.27" width="14.79" height="40.02" fill="#b8242e" fill-opacity="0.82" stroke="#b8242e" stroke-opacity="0.9" stroke-width="0.8"/><rect x="1559.34" y="601.84" width="14.79" height="40.76" fill="#1e9ee4" fill-opacity="0.82" stroke="#1e9ee4" stroke-opacity="0.9" stroke-width="0.8"/><rect x="1559.34" y="552.43" width="14.79" height="49.41" fill="#1e9463" fill-opacity="0.82" stroke="#1e9463" stroke-opacity="0.9" stroke-width="0.8"/><rect x="1559.34" y="521.36" width="14.79" height="31.07" fill="#7b2d96" fill-opacity="0.82" stroke="#7b2d96" stroke-opacity="0.9" stroke-width="0.8"/><rect x="1559.34" y="518.62" width="14.79" height="2.74" fill="#10295a" fill-opacity="0.82" stroke="#10295a" stroke-opacity="0.9" stroke-width="0.8"/><rect x="1559.34" y="459.49" width="14.79" height="59.13" fill="#b8242e" fill-opacity="0.82" stroke="#b8242e" stroke-opacity="0.9" stroke-width="0.8"/><rect x="1574.14" y="602.80" width="14.79" height="39.80" fill="#1e9ee4" fill-opacity="0.82" stroke="#1e9ee4" stroke-opacity="0.9" stroke-width="0.8"/><rect x="1574.14" y="554.27" width="14.79" height="48.53" fill="#1e9463" fill-opacity="0.82" stroke="#1e9463" stroke-opacity="0.9" stroke-width="0.8"/><rect x="1574.14" y="520.09" width="14.79" height="34.19" fill="#7b2d96" fill-opacity="0.82" stroke="#7b2d96" stroke-opacity="0.9" stroke-width="0.8"/><rect x="1574.14" y="517.17" width="14.79" height="2.92" fill="#10295a" fill-opacity="0.82" stroke="#10295a" stroke-opacity="0.9" stroke-width="0.8"/><rect x="1574.14" y="467.12" width="14.79" height="50.05" fill="#b8242e" fill-opacity="0.82" stroke="#b8242e" stroke-opacity="0.9" stroke-width="0.8"/><rect x="1588.93" y="591.56" width="14.79" height="51.04" fill="#1e9ee4" fill-opacity="0.82" stroke="#1e9ee4" stroke-opacity="0.9" stroke-width="0.8"/><rect x="1588.93" y="546.16" width="14.79" height="45.40" fill="#1e9463" fill-opacity="0.82" stroke="#1e9463" stroke-opacity="0.9" stroke-width="0.8"/><rect x="1588.93" y="508.68" width="14.79" height="37.48" fill="#7b2d96" fill-opacity="0.82" stroke="#7b2d96" stroke-opacity="0.9" stroke-width="0.8"/><rect x="1588.93" y="505.90" width="14.79" height="2.77" fill="#10295a" fill-opacity="0.82" stroke="#10295a" stroke-opacity="0.9" stroke-width="0.8"/><rect x="1588.93" y="457.49" width="14.79" height="48.41" fill="#b8242e" fill-opacity="0.82" stroke="#b8242e" stroke-opacity="0.9" stroke-width="0.8"/><rect x="1603.72" y="593.84" width="14.79" height="48.76" fill="#1e9ee4" fill-opacity="0.82" stroke="#1e9ee4" stroke-opacity="0.9" stroke-width="0.8"/><rect x="1603.72" y="547.30" width="14.79" height="46.54" fill="#1e9463" fill-opacity="0.82" stroke="#1e9463" stroke-opacity="0.9" stroke-width="0.8"/><rect x="1603.72" y="512.26" width="14.79" height="35.04" fill="#7b2d96" fill-opacity="0.82" stroke="#7b2d96" stroke-opacity="0.9" stroke-width="0.8"/><rect x="1603.72" y="509.28" width="14.79" height="2.99" fill="#10295a" fill-opacity="0.82" stroke="#10295a" stroke-opacity="0.9" stroke-width="0.8"/><rect x="1603.72" y="457.49" width="14.79" height="51.78" fill="#b8242e" fill-opacity="0.82" stroke="#b8242e" stroke-opacity="0.9" stroke-width="0.8"/><rect x="1618.52" y="603.02" width="14.79" height="39.58" fill="#1e9ee4" fill-opacity="0.82" stroke="#1e9ee4" stroke-opacity="0.9" stroke-width="0.8"/><rect x="1618.52" y="555.06" width="14.79" height="47.96" fill="#1e9463" fill-opacity="0.82" stroke="#1e9463" stroke-opacity="0.9" stroke-width="0.8"/><rect x="1618.52" y="517.68" width="14.79" height="37.38" fill="#7b2d96" fill-opacity="0.82" stroke="#7b2d96" stroke-opacity="0.9" stroke-width="0.8"/><rect x="1618.52" y="514.71" width="14.79" height="2.96" fill="#10295a" fill-opacity="0.82" stroke="#10295a" stroke-opacity="0.9" stroke-width="0.8"/><rect x="1618.52" y="460.60" width="14.79" height="54.11" fill="#b8242e" fill-opacity="0.82" stroke="#b8242e" stroke-opacity="0.9" stroke-width="0.8"/><rect x="1633.31" y="598.44" width="14.79" height="44.16" fill="#1e9ee4" fill-opacity="0.82" stroke="#1e9ee4" stroke-opacity="0.9" stroke-width="0.8"/><rect x="1633.31" y="550.45" width="14.79" height="47.99" fill="#1e9463" fill-opacity="0.82" stroke="#1e9463" stroke-opacity="0.9" stroke-width="0.8"/><rect x="1633.31" y="513.42" width="14.79" height="37.03" fill="#7b2d96" fill-opacity="0.82" stroke="#7b2d96" stroke-opacity="0.9" stroke-width="0.8"/><rect x="1633.31" y="510.43" width="14.79" height="2.99" fill="#10295a" fill-opacity="0.82" stroke="#10295a" stroke-opacity="0.9" stroke-width="0.8"/><rect x="1633.31" y="454.07" width="14.79" height="56.36" fill="#b8242e" fill-opacity="0.82" stroke="#b8242e" stroke-opacity="0.9" stroke-width="0.8"/><rect x="1648.10" y="602.79" width="14.79" height="39.81" fill="#1e9ee4" fill-opacity="0.82" stroke="#1e9ee4" stroke-opacity="0.9" stroke-width="0.8"/><rect x="1648.10" y="553.77" width="14.79" height="49.03" fill="#1e9463" fill-opacity="0.82" stroke="#1e9463" stroke-opacity="0.9" stroke-width="0.8"/><rect x="1648.10" y="522.90" width="14.79" height="30.87" fill="#7b2d96" fill-opacity="0.82" stroke="#7b2d96" stroke-opacity="0.9" stroke-width="0.8"/><rect x="1648.10" y="520.10" width="14.79" height="2.80" fill="#10295a" fill-opacity="0.82" stroke="#10295a" stroke-opacity="0.9" stroke-width="0.8"/><rect x="1648.10" y="476.23" width="14.79" height="43.87" fill="#b8242e" fill-opacity="0.82" stroke="#b8242e" stroke-opacity="0.9" stroke-width="0.8"/><rect x="1662.90" y="597.75" width="14.79" height="44.85" fill="#1e9ee4" fill-opacity="0.82" stroke="#1e9ee4" stroke-opacity="0.9" stroke-width="0.8"/><rect x="1662.90" y="550.33" width="14.79" height="47.42" fill="#1e9463" fill-opacity="0.82" stroke="#1e9463" stroke-opacity="0.9" stroke-width="0.8"/><rect x="1662.90" y="517.51" width="14.79" height="32.82" fill="#7b2d96" fill-opacity="0.82" stroke="#7b2d96" stroke-opacity="0.9" stroke-width="0.8"/><rect x="1662.90" y="514.72" width="14.79" height="2.79" fill="#10295a" fill-opacity="0.82" stroke="#10295a" stroke-opacity="0.9" stroke-width="0.8"/><rect x="1662.90" y="488.56" width="14.79" height="26.16" fill="#b8242e" fill-opacity="0.82" stroke="#b8242e" stroke-opacity="0.9" stroke-width="0.8"/><rect x="1677.69" y="591.93" width="14.79" height="50.67" fill="#1e9ee4" fill-opacity="0.82" stroke="#1e9ee4" stroke-opacity="0.9" stroke-width="0.8"/><rect x="1677.69" y="544.98" width="14.79" height="46.95" fill="#1e9463" fill-opacity="0.82" stroke="#1e9463" stroke-opacity="0.9" stroke-width="0.8"/><rect x="1677.69" y="509.31" width="14.79" height="35.67" fill="#7b2d96" fill-opacity="0.82" stroke="#7b2d96" stroke-opacity="0.9" stroke-width="0.8"/><rect x="1677.69" y="501.42" width="14.79" height="7.90" fill="#ff7f40" fill-opacity="0.82" stroke="#ff7f40" stroke-opacity="0.9" stroke-width="0.8"/><rect x="1677.69" y="498.55" width="14.79" height="2.86" fill="#10295a" fill-opacity="0.82" stroke="#10295a" stroke-opacity="0.9" stroke-width="0.8"/><rect x="1677.69" y="473.45" width="14.79" height="25.10" fill="#b8242e" fill-opacity="0.82" stroke="#b8242e" stroke-opacity="0.9" stroke-width="0.8"/><rect x="1692.48" y="601.30" width="14.79" height="41.30" fill="#1e9ee4" fill-opacity="0.82" stroke="#1e9ee4" stroke-opacity="0.9" stroke-width="0.8"/><rect x="1692.48" y="553.85" width="14.79" height="47.46" fill="#1e9463" fill-opacity="0.82" stroke="#1e9463" stroke-opacity="0.9" stroke-width="0.8"/><rect x="1692.48" y="522.23" width="14.79" height="31.62" fill="#7b2d96" fill-opacity="0.82" stroke="#7b2d96" stroke-opacity="0.9" stroke-width="0.8"/><rect x="1692.48" y="513.61" width="14.79" height="8.61" fill="#ff7f40" fill-opacity="0.82" stroke="#ff7f40" stroke-opacity="0.9" stroke-width="0.8"/><rect x="1692.48" y="510.77" width="14.79" height="2.84" fill="#10295a" fill-opacity="0.82" stroke="#10295a" stroke-opacity="0.9" stroke-width="0.8"/><rect x="1692.48" y="484.06" width="14.79" height="26.71" fill="#b8242e" fill-opacity="0.82" stroke="#b8242e" stroke-opacity="0.9" stroke-width="0.8"/><rect x="1707.28" y="589.98" width="14.79" height="52.62" fill="#1e9ee4" fill-opacity="0.82" stroke="#1e9ee4" stroke-opacity="0.9" stroke-width="0.8"/><rect x="1707.28" y="542.03" width="14.79" height="47.95" fill="#1e9463" fill-opacity="0.82" stroke="#1e9463" stroke-opacity="0.9" stroke-width="0.8"/><rect x="1707.28" y="511.71" width="14.79" height="30.33" fill="#7b2d96" fill-opacity="0.82" stroke="#7b2d96" stroke-opacity="0.9" stroke-width="0.8"/><rect x="1707.28" y="508.97" width="14.79" height="2.74" fill="#10295a" fill-opacity="0.82" stroke="#10295a" stroke-opacity="0.9" stroke-width="0.8"/><rect x="1707.28" y="476.23" width="14.79" height="32.73" fill="#b8242e" fill-opacity="0.82" stroke="#b8242e" stroke-opacity="0.9" stroke-width="0.8"/><rect x="1722.07" y="603.41" width="14.79" height="39.19" fill="#1e9ee4" fill-opacity="0.82" stroke="#1e9ee4" stroke-opacity="0.9" stroke-width="0.8"/><rect x="1722.07" y="556.94" width="14.79" height="46.48" fill="#1e9463" fill-opacity="0.82" stroke="#1e9463" stroke-opacity="0.9" stroke-width="0.8"/><rect x="1722.07" y="526.57" width="14.79" height="30.37" fill="#7b2d96" fill-opacity="0.82" stroke="#7b2d96" stroke-opacity="0.9" stroke-width="0.8"/><rect x="1722.07" y="523.74" width="14.79" height="2.82" fill="#10295a" fill-opacity="0.82" stroke="#10295a" stroke-opacity="0.9" stroke-width="0.8"/><rect x="1722.07" y="493.51" width="14.79" height="30.23" fill="#b8242e" fill-opacity="0.82" stroke="#b8242e" stroke-opacity="0.9" stroke-width="0.8"/><rect x="1736.86" y="600.16" width="14.79" height="42.44" fill="#1e9ee4" fill-opacity="0.82" stroke="#1e9ee4" stroke-opacity="0.9" stroke-width="0.8"/><rect x="1736.86" y="560.39" width="14.79" height="39.77" fill="#1e9463" fill-opacity="0.82" stroke="#1e9463" stroke-opacity="0.9" stroke-width="0.8"/><rect x="1736.86" y="525.45" width="14.79" height="34.95" fill="#7b2d96" fill-opacity="0.82" stroke="#7b2d96" stroke-opacity="0.9" stroke-width="0.8"/><rect x="1736.86" y="519.84" width="14.79" height="5.61" fill="#10295a" fill-opacity="0.82" stroke="#10295a" stroke-opacity="0.9" stroke-width="0.8"/><rect x="1736.86" y="495.62" width="14.79" height="24.22" fill="#b8242e" fill-opacity="0.82" stroke="#b8242e" stroke-opacity="0.9" stroke-width="0.8"/><rect x="1751.66" y="604.43" width="14.79" height="38.17" fill="#1e9ee4" fill-opacity="0.82" stroke="#1e9ee4" stroke-opacity="0.9" stroke-width="0.8"/><rect x="1751.66" y="567.89" width="14.79" height="36.54" fill="#1e9463" fill-opacity="0.82" stroke="#1e9463" stroke-opacity="0.9" stroke-width="0.8"/><rect x="1751.66" y="530.99" width="14.79" height="36.91" fill="#7b2d96" fill-opacity="0.82" stroke="#7b2d96" stroke-opacity="0.9" stroke-width="0.8"/><rect x="1751.66" y="525.53" width="14.79" height="5.45" fill="#10295a" fill-opacity="0.82" stroke="#10295a" stroke-opacity="0.9" stroke-width="0.8"/><rect x="1751.66" y="490.93" width="14.79" height="34.60" fill="#b8242e" fill-opacity="0.82" stroke="#b8242e" stroke-opacity="0.9" stroke-width="0.8"/><rect x="1766.45" y="605.02" width="14.79" height="37.58" fill="#1e9ee4" fill-opacity="0.82" stroke="#1e9ee4" stroke-opacity="0.9" stroke-width="0.8"/><rect x="1766.45" y="566.88" width="14.79" height="38.14" fill="#1e9463" fill-opacity="0.82" stroke="#1e9463" stroke-opacity="0.9" stroke-width="0.8"/><rect x="1766.45" y="532.49" width="14.79" height="34.39" fill="#7b2d96" fill-opacity="0.82" stroke="#7b2d96" stroke-opacity="0.9" stroke-width="0.8"/><rect x="1766.45" y="526.76" width="14.79" height="5.72" fill="#10295a" fill-opacity="0.82" stroke="#10295a" stroke-opacity="0.9" stroke-width="0.8"/><rect x="1766.45" y="482.72" width="14.79" height="44.04" fill="#b8242e" fill-opacity="0.82" stroke="#b8242e" stroke-opacity="0.9" stroke-width="0.8"/><rect x="1781.25" y="600.32" width="14.79" height="42.28" fill="#1e9ee4" fill-opacity="0.82" stroke="#1e9ee4" stroke-opacity="0.9" stroke-width="0.8"/><rect x="1781.25" y="561.11" width="14.79" height="39.21" fill="#1e9463" fill-opacity="0.82" stroke="#1e9463" stroke-opacity="0.9" stroke-width="0.8"/><rect x="1781.25" y="531.33" width="14.79" height="29.78" fill="#7b2d96" fill-opacity="0.82" stroke="#7b2d96" stroke-opacity="0.9" stroke-width="0.8"/><rect x="1781.25" y="525.61" width="14.79" height="5.72" fill="#10295a" fill-opacity="0.82" stroke="#10295a" stroke-opacity="0.9" stroke-width="0.8"/><rect x="1781.25" y="498.87" width="14.79" height="26.74" fill="#b8242e" fill-opacity="0.82" stroke="#b8242e" stroke-opacity="0.9" stroke-width="0.8"/><rect x="1796.04" y="597.39" width="14.79" height="45.21" fill="#1e9ee4" fill-opacity="0.82" stroke="#1e9ee4" stroke-opacity="0.9" stroke-width="0.8"/><rect x="1796.04" y="551.76" width="14.79" height="45.63" fill="#1e9463" fill-opacity="0.82" stroke="#1e9463" stroke-opacity="0.9" stroke-width="0.8"/><rect x="1796.04" y="520.72" width="14.79" height="31.04" fill="#7b2d96" fill-opacity="0.82" stroke="#7b2d96" stroke-opacity="0.9" stroke-width="0.8"/><rect x="1796.04" y="515.27" width="14.79" height="5.45" fill="#10295a" fill-opacity="0.82" stroke="#10295a" stroke-opacity="0.9" stroke-width="0.8"/><rect x="1796.04" y="468.09" width="14.79" height="47.18" fill="#b8242e" fill-opacity="0.82" stroke="#b8242e" stroke-opacity="0.9" stroke-width="0.8"/><rect x="1810.83" y="590.34" width="14.79" height="52.26" fill="#1e9ee4" fill-opacity="0.82" stroke="#1e9ee4" stroke-opacity="0.9" stroke-width="0.8"/><rect x="1810.83" y="543.11" width="14.79" height="47.23" fill="#1e9463" fill-opacity="0.82" stroke="#1e9463" stroke-opacity="0.9" stroke-width="0.8"/><rect x="1810.83" y="505.78" width="14.79" height="37.33" fill="#7b2d96" fill-opacity="0.82" stroke="#7b2d96" stroke-opacity="0.9" stroke-width="0.8"/><rect x="1810.83" y="500.06" width="14.79" height="5.72" fill="#10295a" fill-opacity="0.82" stroke="#10295a" stroke-opacity="0.9" stroke-width="0.8"/><rect x="1810.83" y="474.89" width="14.79" height="25.16" fill="#b8242e" fill-opacity="0.82" stroke="#b8242e" stroke-opacity="0.9" stroke-width="0.8"/><rect x="1825.63" y="593.87" width="14.79" height="48.73" fill="#1e9ee4" fill-opacity="0.82" stroke="#1e9ee4" stroke-opacity="0.9" stroke-width="0.8"/><rect x="1825.63" y="545.20" width="14.79" height="48.66" fill="#1e9463" fill-opacity="0.82" stroke="#1e9463" stroke-opacity="0.9" stroke-width="0.8"/><rect x="1825.63" y="512.91" width="14.79" height="32.29" fill="#7b2d96" fill-opacity="0.82" stroke="#7b2d96" stroke-opacity="0.9" stroke-width="0.8"/><rect x="1825.63" y="507.19" width="14.79" height="5.72" fill="#10295a" fill-opacity="0.82" stroke="#10295a" stroke-opacity="0.9" stroke-width="0.8"/><rect x="1825.63" y="469.44" width="14.79" height="37.75" fill="#b8242e" fill-opacity="0.82" stroke="#b8242e" stroke-opacity="0.9" stroke-width="0.8"/><rect x="1840.42" y="600.91" width="14.79" height="41.69" fill="#1e9ee4" fill-opacity="0.82" stroke="#1e9ee4" stroke-opacity="0.9" stroke-width="0.8"/><rect x="1840.42" y="552.25" width="14.79" height="48.66" fill="#1e9463" fill-opacity="0.82" stroke="#1e9463" stroke-opacity="0.9" stroke-width="0.8"/><rect x="1840.42" y="519.12" width="14.79" height="33.13" fill="#7b2d96" fill-opacity="0.82" stroke="#7b2d96" stroke-opacity="0.9" stroke-width="0.8"/><rect x="1840.42" y="513.39" width="14.79" height="5.72" fill="#10295a" fill-opacity="0.82" stroke="#10295a" stroke-opacity="0.9" stroke-width="0.8"/><rect x="1840.42" y="477.22" width="14.79" height="36.17" fill="#b8242e" fill-opacity="0.82" stroke="#b8242e" stroke-opacity="0.9" stroke-width="0.8"/><rect x="1855.21" y="590.34" width="14.79" height="52.26" fill="#1e9ee4" fill-opacity="0.82" stroke="#1e9ee4" stroke-opacity="0.9" stroke-width="0.8"/><rect x="1855.21" y="541.15" width="14.79" height="49.20" fill="#1e9463" fill-opacity="0.82" stroke="#1e9463" stroke-opacity="0.9" stroke-width="0.8"/><rect x="1855.21" y="511.37" width="14.79" height="29.78" fill="#7b2d96" fill-opacity="0.82" stroke="#7b2d96" stroke-opacity="0.9" stroke-width="0.8"/><rect x="1855.21" y="505.64" width="14.79" height="5.72" fill="#10295a" fill-opacity="0.82" stroke="#10295a" stroke-opacity="0.9" stroke-width="0.8"/><rect x="1855.21" y="475.76" width="14.79" height="29.88" fill="#b8242e" fill-opacity="0.82" stroke="#b8242e" stroke-opacity="0.9" stroke-width="0.8"/><rect x="1870.01" y="593.28" width="14.79" height="49.32" fill="#1e9ee4" fill-opacity="0.82" stroke="#1e9ee4" stroke-opacity="0.9" stroke-width="0.8"/><rect x="1870.01" y="546.58" width="14.79" height="46.70" fill="#1e9463" fill-opacity="0.82" stroke="#1e9463" stroke-opacity="0.9" stroke-width="0.8"/><rect x="1870.01" y="516.38" width="14.79" height="30.20" fill="#7b2d96" fill-opacity="0.82" stroke="#7b2d96" stroke-opacity="0.9" stroke-width="0.8"/><rect x="1870.01" y="510.93" width="14.79" height="5.45" fill="#10295a" fill-opacity="0.82" stroke="#10295a" stroke-opacity="0.9" stroke-width="0.8"/><rect x="1870.01" y="481.05" width="14.79" height="29.88" fill="#b8242e" fill-opacity="0.82" stroke="#b8242e" stroke-opacity="0.9" stroke-width="0.8"/><path d="M1426.2 432.9 V642.6" stroke="#cfcfcf" stroke-width="1"/><text transform="translate(1391.5 543) rotate(-90)" font-size="9" fill="#979797" text-anchor="middle">$/d</text><rect x="1770.5" y="436.6" width="110" height="93" fill="#fff" fill-opacity="0.98" stroke="#f3f3f3" stroke-width="1"/><rect x="1774.3" y="441.5" width="12" height="8.4" fill="#1e9ee4"/><text x="1790.1" y="449.1" font-size="9" fill="#979797">Caustic</text><rect x="1774.3" y="456.65" width="12" height="8.4" fill="#1e9463"/><text x="1790.1" y="464.25" font-size="9" fill="#979797">Alum</text><rect x="1774.3" y="471.8" width="12" height="8.4" fill="#7b2d96"/><text x="1790.1" y="479.4" font-size="9" fill="#979797">Acetic Acid</text><rect x="1774.3" y="486.95" width="12" height="8.4" fill="#ff7f40"/><text x="1790.1" y="494.55" font-size="9" fill="#979797">Citric Acid</text><rect x="1774.3" y="502.1" width="12" height="8.4" fill="#10295a"/><text x="1790.1" y="509.7" font-size="9" fill="#979797">Hypochlorite</text><rect x="1774.3" y="517.25" width="12" height="8.4" fill="#b8242e"/><text x="1790.1" y="524.85" font-size="9" fill="#979797">Polymer Consumption</text></svg>
<div class="card" style="left:1372px;top:677px;width:535px;height:266px"><div class="ct" style="letter-spacing:-0.08px">Total Chemical Cost Per m3 Influent Treated</div></div>
<svg class="abs" style="left:1372px;top:703px" width="535" height="238" viewBox="1372 703 535 238"><path d="M1416.5 909.5 H1738.5" stroke="#ebebeb" stroke-width="1"/><text x="1412.5" y="912.1" font-size="8.6" fill="#979797" text-anchor="end">0.00</text><path d="M1416.5 711.7 V909" stroke="#ebebeb" stroke-width="1"/><text x="1416.5" y="921" font-size="8.6" fill="#979797" text-anchor="middle">0.00</text><path d="M1416.5 869.5 H1738.5" stroke="#ebebeb" stroke-width="1"/><text x="1412.5" y="872.64" font-size="8.6" fill="#979797" text-anchor="end">0.20</text><path d="M1480.5 711.7 V909" stroke="#ebebeb" stroke-width="1"/><text x="1480.9" y="921" font-size="8.6" fill="#979797" text-anchor="middle">500.00</text><path d="M1416.5 830.5 H1738.5" stroke="#ebebeb" stroke-width="1"/><text x="1412.5" y="833.18" font-size="8.6" fill="#979797" text-anchor="end">0.40</text><path d="M1545.5 711.7 V909" stroke="#ebebeb" stroke-width="1"/><text x="1545.3" y="921" font-size="8.6" fill="#979797" text-anchor="middle">1000.00</text><path d="M1416.5 790.5 H1738.5" stroke="#ebebeb" stroke-width="1"/><text x="1412.5" y="793.72" font-size="8.6" fill="#979797" text-anchor="end">0.60</text><path d="M1609.5 711.7 V909" stroke="#ebebeb" stroke-width="1"/><text x="1609.7" y="921" font-size="8.6" fill="#979797" text-anchor="middle">1500.00</text><path d="M1416.5 751.5 H1738.5" stroke="#ebebeb" stroke-width="1"/><text x="1412.5" y="754.26" font-size="8.6" fill="#979797" text-anchor="end">0.80</text><path d="M1674.5 711.7 V909" stroke="#ebebeb" stroke-width="1"/><text x="1674.1" y="921" font-size="8.6" fill="#979797" text-anchor="middle">2000.00</text><path d="M1416.5 711.5 H1738.5" stroke="#ebebeb" stroke-width="1"/><text x="1412.5" y="714.8" font-size="8.6" fill="#979797" text-anchor="end">1.00</text><path d="M1738.5 711.7 V909" stroke="#ebebeb" stroke-width="1"/><text x="1738.5" y="921" font-size="8.6" fill="#979797" text-anchor="middle">2500.00</text><path d="M1416.5 711.7 V909.5 H1738.5" stroke="#c9c9c9" stroke-width="1" fill="none"/><text x="1577" y="934.5" font-size="9" fill="#979797" text-anchor="middle">m3/d</text><text transform="translate(1391.5 816) rotate(-90)" font-size="9" fill="#979797" text-anchor="middle">$/m3</text><circle cx="1625.0" cy="818.3" r="1.9" fill="#1f98d6"/><circle cx="1615.8" cy="822.8" r="1.9" fill="#1f98d6"/><circle cx="1644.2" cy="826.9" r="1.9" fill="#1f98d6"/><circle cx="1629.5" cy="831.1" r="1.9" fill="#1f98d6"/><circle cx="1662.4" cy="834.7" r="1.9" fill="#1f98d6"/><circle cx="1611.4" cy="826.6" r="1.9" fill="#1f98d6"/><circle cx="1610.0" cy="831.2" r="1.9" fill="#1f98d6"/><circle cx="1638.4" cy="834.4" r="1.9" fill="#1f98d6"/><circle cx="1662.6" cy="844.3" r="1.9" fill="#1f98d6"/><circle cx="1658.9" cy="835.8" r="1.9" fill="#1f98d6"/><circle cx="1612.7" cy="822.3" r="1.9" fill="#1f98d6"/><circle cx="1679.4" cy="840.7" r="1.9" fill="#1f98d6"/><circle cx="1641.8" cy="829.3" r="1.9" fill="#1f98d6"/><circle cx="1627.7" cy="825.5" r="1.9" fill="#1f98d6"/><circle cx="1662.0" cy="834.5" r="1.9" fill="#1f98d6"/><circle cx="1617.4" cy="828.7" r="1.9" fill="#1f98d6"/><circle cx="1615.5" cy="834.0" r="1.9" fill="#1f98d6"/><circle cx="1678.9" cy="846.5" r="1.9" fill="#1f98d6"/><circle cx="1625.3" cy="835.4" r="1.9" fill="#1f98d6"/><circle cx="1660.4" cy="842.9" r="1.9" fill="#1f98d6"/><circle cx="1655.6" cy="848.5" r="1.9" fill="#1f98d6"/><circle cx="1628.8" cy="841.9" r="1.9" fill="#1f98d6"/><circle cx="1619.4" cy="836.5" r="1.9" fill="#1f98d6"/><circle cx="1679.5" cy="850.1" r="1.9" fill="#1f98d6"/><circle cx="1618.7" cy="840.1" r="1.9" fill="#1f98d6"/><circle cx="1637.6" cy="832.5" r="1.9" fill="#1f98d6"/><circle cx="1647.8" cy="838.7" r="1.9" fill="#1f98d6"/><circle cx="1655.7" cy="838.8" r="1.9" fill="#1f98d6"/><circle cx="1623.6" cy="831.6" r="1.9" fill="#1f98d6"/><circle cx="1621.7" cy="830.2" r="1.9" fill="#1f98d6"/><circle cx="1675.1" cy="848.4" r="1.9" fill="#1f98d6"/><path d="M1795.5 919.5 H1885.5" stroke="#ebebeb" stroke-width="1"/><text x="1792" y="922.4" font-size="8.6" fill="#979797" text-anchor="end">0.0</text><path d="M1795.5 878.5 H1885.5" stroke="#ebebeb" stroke-width="1"/><text x="1792" y="881.28" font-size="8.6" fill="#979797" text-anchor="end">0.2</text><path d="M1795.5 837.5 H1885.5" stroke="#ebebeb" stroke-width="1"/><text x="1792" y="840.16" font-size="8.6" fill="#979797" text-anchor="end">0.4</text><path d="M1795.5 795.5 H1885.5" stroke="#ebebeb" stroke-width="1"/><text x="1792" y="799.04" font-size="8.6" fill="#979797" text-anchor="end">0.6</text><path d="M1795.5 754.5 H1885.5" stroke="#ebebeb" stroke-width="1"/><text x="1792" y="757.92" font-size="8.6" fill="#979797" text-anchor="end">0.8</text><path d="M1795.5 713.5 H1885.5" stroke="#ebebeb" stroke-width="1"/><text x="1792" y="716.8" font-size="8.6" fill="#979797" text-anchor="end">1.0</text><path d="M1840.5 713.7 V919.3" stroke="#ebebeb" stroke-width="1"/><path d="M1795.5 713.7 H1885.5 V919.3" stroke="#ebebeb" stroke-width="1" fill="none"/><path d="M1795.5 713.7 V919.5 H1885.5" stroke="#c9c9c9" stroke-width="1" fill="none"/><path d="M1840 828.836 V856.386 M1829.4 828.836 H1851.6 M1829.4 856.386 H1851.6" stroke="#2a9be0" stroke-width="1" fill="none"/><rect x="1828.8" y="836.2" width="23.2" height="12.2" fill="#2399e0"/><path d="M1828.8 841.4 H1852" stroke="#123a63" stroke-width="1.6"/></svg>
<div class="card" style="left:1372px;top:958px;width:535px;height:140px;border-radius:3px 3px 0 0"><div class="ct" style="letter-spacing:-0.19px">Daily Chemical Consumption</div><svg class="abs" style="right:10.7px;top:7.7px" width="11.6" height="8.4" viewBox="0 0 11.6 8.4"><path d="M0 4.2 C1.8 1.2 3.8 0 5.8 0 S9.8 1.2 11.6 4.2 C9.8 7.2 7.8 8.4 5.8 8.4 S1.8 7.2 0 4.2 Z" fill="#1f6283"/><circle cx="5.8" cy="4.2" r="2.75" fill="#e4faff"/><circle cx="5.8" cy="4.2" r="1.5" fill="#17435c"/></svg></div>
<svg class="abs" style="left:1372px;top:984px" width="535" height="96" viewBox="1372 984 535 96"><path d="M1426.2 992.5 H1884.8" stroke="#ebebeb" stroke-width="1"/><text x="1422.5" y="995.7" font-size="8.6" fill="#979797" text-anchor="end">300.00</text><path d="M1426.2 1027.5 H1884.8" stroke="#ebebeb" stroke-width="1"/><text x="1422.5" y="1030.7" font-size="8.6" fill="#979797" text-anchor="end">250.00</text><path d="M1426.2 1062.5 H1884.8" stroke="#ebebeb" stroke-width="1"/><text x="1422.5" y="1065.7" font-size="8.6" fill="#979797" text-anchor="end">200.00</text><path d="M1426.2 1097.5 H1884.8" stroke="#ebebeb" stroke-width="1"/><text x="1422.5" y="1100.7" font-size="8.6" fill="#979797" text-anchor="end">150.00</text><path d="M1426.5 992.5 V1080" stroke="#ebebeb" stroke-width="1"/><path d="M1485.5 992.5 V1080" stroke="#ebebeb" stroke-width="1"/><path d="M1544.5 992.5 V1080" stroke="#ebebeb" stroke-width="1"/><path d="M1603.5 992.5 V1080" stroke="#ebebeb" stroke-width="1"/><path d="M1662.5 992.5 V1080" stroke="#ebebeb" stroke-width="1"/><path d="M1722.5 992.5 V1080" stroke="#ebebeb" stroke-width="1"/><path d="M1781.5 992.5 V1080" stroke="#ebebeb" stroke-width="1"/><path d="M1840.5 992.5 V1080" stroke="#ebebeb" stroke-width="1"/><path d="M1884.8 992.5 V1080" stroke="#ebebeb" stroke-width="1"/><path d="M1426.2 992.5 V1080" stroke="#cfcfcf" stroke-width="1"/><polyline points="1432.7,1019.8 1447.5,1010.7 1462.3,1026.8 1477.1,1025.4 1491.9,1017.7 1506.7,1020.5 1521.5,1014.9 1536.3,1017.7 1551.1,1017.7 1565.9,1008.6 1580.6,1012.1 1595.4,1024.0 1610.2,1019.8 1625.0,1014.2 1639.8,1014.2 1654.6,1010.0 1669.4,1016.3 1684.2,1018.4 1699.0,1016.3 1713.8,1014.2 1728.6,1019.8 1743.4,1046.4 1758.2,1059.0 1773.0,1052.7 1787.8,1048.5 1802.5,1023.3 1817.3,1017.0 1832.1,1011.4 1846.9,1011.4 1861.7,1009.3 1876.5,1019.1" fill="none" stroke="#3fa67a" stroke-width="1.1" stroke-linejoin="round"/><rect x="1770.5" y="995.1" width="110" height="93" fill="#fff" fill-opacity="0.98" stroke="#f3f3f3" stroke-width="1"/><rect x="1774.3" y="1000" width="12" height="8.4" fill="#1e9ee4"/><text x="1790.1" y="1007.6" font-size="9" fill="#979797">Caustic</text><rect x="1774.3" y="1015.15" width="12" height="8.4" fill="#1e9463"/><text x="1790.1" y="1022.75" font-size="9" fill="#979797">Alum</text><rect x="1774.3" y="1030.3" width="12" height="8.4" fill="#7b2d96"/><text x="1790.1" y="1037.9" font-size="9" fill="#979797">Acetic Acid</text><rect x="1774.3" y="1045.45" width="12" height="8.4" fill="#ff7f40"/><text x="1790.1" y="1053.05" font-size="9" fill="#979797">Citric Acid</text><rect x="1774.3" y="1060.6" width="12" height="8.4" fill="#10295a"/><text x="1790.1" y="1068.2" font-size="9" fill="#979797">Hypochlorite</text><rect x="1774.3" y="1075.75" width="12" height="8.4" fill="#b8242e"/><text x="1790.1" y="1083.35" font-size="9" fill="#979797">Polymer Consumption</text></svg>
</body></html>
